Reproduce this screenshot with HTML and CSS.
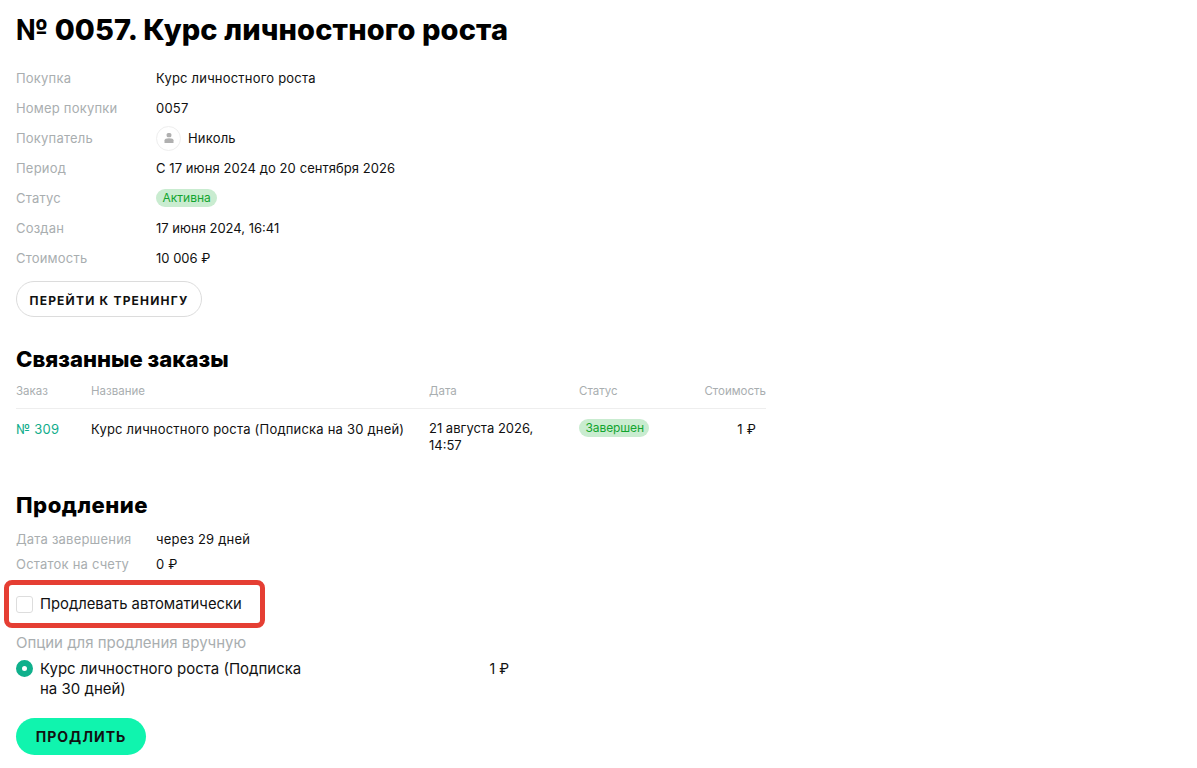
FILE: index.html
```html
<!DOCTYPE html>
<html lang="ru">
<head>
<meta charset="utf-8">
<title>Покупка</title>
<link rel="stylesheet" href="styles.css">
</head>
<body>
<h1 class="title">№ 0057. Курс личностного роста</h1>
<dl class="info">
  <div class="row"><dt>Покупка</dt><dd>Курс личностного роста</dd></div>
  <div class="row"><dt>Номер покупки</dt><dd>0057</dd></div>
  <div class="row"><dt>Покупатель</dt><dd class="buyer"><span class="avatar"><svg width="12" height="12" viewBox="0 0 12 12"><rect x="3.6" y="1" width="4.800" height="4.300" rx="1.500" fill="#b0b0b0"/><path d="M1.500 11V8.300C1.500 7 3 6.300 6 6.300s4.500.7 4.500 2V11z" fill="#b0b0b0"/></svg></span>Николь</dd></div>
  <div class="row"><dt>Период</dt><dd class="tight">С 17 июня 2024 до 20 сентября 2026</dd></div>
  <div class="row"><dt>Статус</dt><dd><span class="badge">Активна</span></dd></div>
  <div class="row"><dt>Создан</dt><dd class="num">17 июня 2024, 16:41</dd></div>
  <div class="row"><dt>Стоимость</dt><dd class="num">10 006 ₽</dd></div>
</dl>
<a class="btn-outline"><span class="btn-text">ПЕРЕЙТИ К ТРЕНИНГУ</span></a>

<h2 class="section orders-title">Связанные заказы</h2>
<table class="orders">
  <thead>
    <tr><th class="c1">Заказ</th><th class="c2">Название</th><th class="c3">Дата</th><th class="c4">Статус</th><th class="c5">Стоимость</th></tr>
  </thead>
  <tbody>
    <tr>
      <td><a class="link">№ 309</a></td>
      <td>Курс личностного роста (Подписка на 30 дней)</td>
      <td class="date">21 августа 2026, 14:57</td>
      <td><span class="badge badge-wide">Завершен</span></td>
      <td class="price">1 ₽</td>
    </tr>
  </tbody>
</table>

<h2 class="section renew-title">Продление</h2>
<div class="renew-row"><span class="renew-label">Дата завершения</span><span>через 29 дней</span></div>
<div class="renew-row"><span class="renew-label">Остаток на счету</span><span>0 ₽</span></div>

<div class="highlight">
  <span class="checkbox"></span>
  <span class="auto-label">Продлевать автоматически</span>
</div>

<div class="options-title">Опции для продления вручную</div>
<div class="option">
  <span class="radio"></span>
  <span class="option-name">Курс личностного роста (Подписка на 30 дней)</span>
  <span class="option-price">1 ₽</span>
</div>
<a class="btn-primary">ПРОДЛИТЬ</a>
</body>
</html>
```

FILE: styles.css
```css
* { box-sizing: border-box; }
html, body { margin: 0; padding: 0; }
body {
  background: #fff;
  color: #111;
  font-family: "Inter", "Noto Sans", sans-serif;
  font-size: 13px;
  line-height: 18px;
  letter-spacing: .2px;
  padding: 0 0 0 16px;
  height: 768px;
  overflow: hidden;
}
.title {
  margin: 0;
  padding-top: 12px;
  font-size: 29px;
  line-height: 36px;
  font-weight: 800;
  letter-spacing: .13px;
  color: #000;
}
.info { margin: 15px 0 0; }
.row { display: flex; align-items: center; height: 30px; }
dt { width: 140px; color: #a9aeb0; }
dd { margin: 0; color: #111; }
.tight { letter-spacing: .08px; }
.num { letter-spacing: 0; }
.buyer { display: flex; align-items: center; gap: 7px; }
.avatar {
  width: 25px; height: 25px; border-radius: 50%;
  border: 1px solid #eee;
  display: flex; align-items: center; justify-content: center;
}
.badge {
  display: inline-block;
  vertical-align: top;
  background: #c9ecd0;
  color: #12a52f;
  border-radius: 9px;
  font-size: 12px;
  line-height: 18px;
  letter-spacing: 0;
  padding: 0 6.5px;
}
.badge-wide { padding: 0 5.5px 0 6.5px; letter-spacing: -.1px; }
.btn-outline {
  display: inline-flex; align-items: center; justify-content: center;
  width: 186px; height: 36px;
  margin-top: 8px;
  border: 1px solid #dcdcdc;
  border-radius: 18px;
  font-size: 12px;
  font-weight: 700;
  letter-spacing: 1.2px;
  color: #111;
}
.btn-text { padding-top: 3px; }
.section { margin: 0; font-size: 22.1px; line-height: 28px; font-weight: 800; letter-spacing: 0; color: #000; }
.orders-title { margin-top: 28px; }
.orders { border-collapse: collapse; table-layout: fixed; width: 750px; margin-top: 10px; }
.orders th {
  font-weight: 400; font-size: 11.5px; line-height: 16px; letter-spacing: 0; color: #a9aeb0;
  text-align: left; padding: 0 0 9px; border-bottom: 1px solid #eee;
}
.orders td { vertical-align: top; padding: 10px 0 0; line-height: 21px; }
.orders td.date { padding: 11px 30px 0 0; line-height: 17px; letter-spacing: 0; }
.c1 { width: 75px; } .c2 { width: 338px; } .c3 { width: 150px; } .c4 { width: 110px; }
.orders th.c5 { text-align: right; }
.orders td.price { text-align: right; padding-right: 10px; }
.link { color: #10ad8b; }
.renew-title { margin-top: 37px; letter-spacing: .5px; }
.renew-row { display: flex; align-items: center; height: 25px; }
.renew-title + .renew-row { margin-top: 7px; }
.renew-label { width: 140px; color: #a9aeb0; }
.highlight {
  display: flex; align-items: center; gap: 7px;
  width: 261px; height: 48px;
  margin: 4px 0 0 -12px;
  padding-left: 7px;
  border: 5px solid #e53e33;
  border-radius: 8px;
}
.checkbox { width: 17px; height: 17px; border: 1px solid #ddd; border-radius: 3px; flex: none; }
.auto-label { font-size: 14.8px; letter-spacing: 0; }
.options-title { margin-top: 6px; font-size: 15px; line-height: 18px; letter-spacing: 0; color: #a9aeb0; }
.option { display: flex; align-items: flex-start; margin-top: 7px; width: 493px; font-size: 15px; line-height: 20px; letter-spacing: 0; }
.radio { width: 17px; height: 17px; border-radius: 50%; border: 6px solid #0fb08c; margin-top: 1px; margin-right: 7px; flex: none; }
.option-name { width: 270px; }
.option-price { margin-left: auto; font-size: 14px; }
.btn-primary {
  display: flex; align-items: center; justify-content: center;
  width: 130px; height: 37px; margin-top: 19px;
  background: #10f4ae; border-radius: 19px;
  font-size: 14px; font-weight: 700; letter-spacing: 1px; color: #111;
}
```
